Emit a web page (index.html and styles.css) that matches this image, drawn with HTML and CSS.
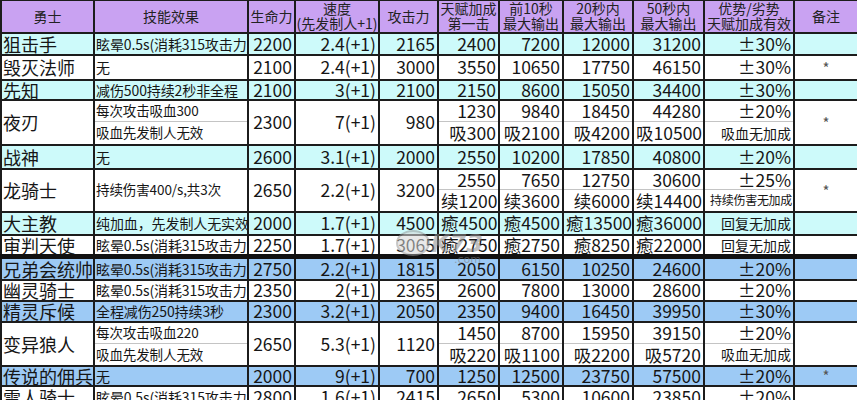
FILE: index.html
```html
<!DOCTYPE html>
<html lang="zh">
<head>
<meta charset="utf-8">
<link rel="stylesheet" href="styles.css">
</head>
<body>
<div class="sheet">
<table class="grid">
<colgroup>
<col class="c1"><col class="c2"><col class="c3"><col class="c4"><col class="c5"><col class="c6"><col class="c7"><col class="c8"><col class="c9"><col class="c10"><col class="c11">
</colgroup>
<thead>
<tr class="hd">
<th>勇士</th><th>技能效果</th><th>生命力</th><th><span class="tl">速度</span><span class="tl">(先发制人+1)</span></th><th>攻击力</th><th><span class="tl">天赋加成</span><span class="tl">第一击</span></th><th><span class="tl">前10秒</span><span class="tl">最大输出</span></th><th><span class="tl">20秒内</span><span class="tl">最大输出</span></th><th><span class="tl">50秒内</span><span class="tl">最大输出</span></th><th><span class="tl">优势/劣势</span><span class="tl">天赋加成有效</span></th><th>备注</th>
</tr>
</thead>
<tbody>
<tr class="cyan h22">
<td class="nm">狙击手</td><td class="sk">眩晕0.5s(消耗315攻击力)</td><td class="n">2200</td><td class="n">2.4(+1)</td><td class="n">2165</td><td class="n">2400</td><td class="n">7200</td><td class="n">12000</td><td class="n">31200</td><td class="n">±30%</td><td class="nt"></td>
</tr>
<tr class="white h25">
<td class="nm">毁灭法师</td><td class="sk">无</td><td class="n">2100</td><td class="n">2.4(+1)</td><td class="n">3000</td><td class="n">3550</td><td class="n">10650</td><td class="n">17750</td><td class="n">46150</td><td class="n">±30%</td><td class="nt">*</td>
</tr>
<tr class="cyan h19">
<td class="nm">先知</td><td class="sk">减伤500持续2秒非全程</td><td class="n">2100</td><td class="n">3(+1)</td><td class="n">2100</td><td class="n">2150</td><td class="n">8600</td><td class="n">15050</td><td class="n">34400</td><td class="n">±30%</td><td class="nt"></td>
</tr>
<tr class="white h22">
<td class="nm" rowspan="2">夜刃</td><td class="sk sm st">每次攻击吸血300</td><td class="n" rowspan="2">2300</td><td class="n" rowspan="2">7(+1)</td><td class="n" rowspan="2">980</td><td class="n st">1230</td><td class="n st">9840</td><td class="n st">18450</td><td class="n st">44280</td><td class="n st">±20%</td><td class="nt" rowspan="2">*</td>
</tr>
<tr class="white h23">
<td class="sk sm sb">吸血先发制人无效</td><td class="n sb">吸300</td><td class="n sb">吸2100</td><td class="n sb">吸4200</td><td class="n sb">吸10500</td><td class="n sb note">吸血无加成</td>
</tr>
<tr class="cyan h24">
<td class="nm">战神</td><td class="sk">无</td><td class="n">2600</td><td class="n">3.1(+1)</td><td class="n">2000</td><td class="n">2550</td><td class="n">10200</td><td class="n">17850</td><td class="n">40800</td><td class="n">±20%</td><td class="nt"></td>
</tr>
<tr class="white h21">
<td class="nm" rowspan="2">龙骑士</td><td class="sk sm" rowspan="2">持续伤害400/s,共3次</td><td class="n" rowspan="2">2650</td><td class="n" rowspan="2">2.2(+1)</td><td class="n" rowspan="2">3200</td><td class="n st">2550</td><td class="n st">7650</td><td class="n st">12750</td><td class="n st">30600</td><td class="n st">±25%</td><td class="nt" rowspan="2">*</td>
</tr>
<tr class="white h22">
<td class="n sb">续1200</td><td class="n sb">续3600</td><td class="n sb">续6000</td><td class="n sb">续14400</td><td class="n sb note xs">持续伤害无加成</td>
</tr>
<tr class="cyan h23">
<td class="nm">大主教</td><td class="sk">纯加血，先发制人无实效</td><td class="n">2000</td><td class="n">1.7(+1)</td><td class="n">4500</td><td class="n">癒4500</td><td class="n">癒4500</td><td class="n">癒13500</td><td class="n">癒36000</td><td class="n note">回复无加成</td><td class="nt"></td>
</tr>
<tr class="white h22">
<td class="nm">审判天使</td><td class="sk">眩晕0.5s(消耗315攻击力)</td><td class="n">2250</td><td class="n">1.7(+1)</td><td class="n">3065</td><td class="n">癒2750</td><td class="n">癒2750</td><td class="n">癒8250</td><td class="n">癒22000</td><td class="n note">回复无加成</td><td class="nt"></td>
</tr>
<tr class="blue h23 thick">
<td class="nm">兄弟会统帅</td><td class="sk">眩晕0.5s(消耗315攻击力)</td><td class="n">2750</td><td class="n">2.2(+1)</td><td class="n">1815</td><td class="n">2050</td><td class="n">6150</td><td class="n">10250</td><td class="n">24600</td><td class="n">±20%</td><td class="nt"></td>
</tr>
<tr class="white h21">
<td class="nm">幽灵骑士</td><td class="sk">眩晕0.5s(消耗315攻击力)</td><td class="n">2350</td><td class="n">2(+1)</td><td class="n">2365</td><td class="n">2600</td><td class="n">7800</td><td class="n">13000</td><td class="n">28600</td><td class="n">±20%</td><td class="nt"></td>
</tr>
<tr class="blue h21">
<td class="nm">精灵斥候</td><td class="sk">全程减伤250持续3秒</td><td class="n">2300</td><td class="n">3.2(+1)</td><td class="n">2050</td><td class="n">2350</td><td class="n">9400</td><td class="n">16450</td><td class="n">39950</td><td class="n">±30%</td><td class="nt"></td>
</tr>
<tr class="white h22">
<td class="nm" rowspan="2">变异狼人</td><td class="sk sm st">每次攻击吸血220</td><td class="n" rowspan="2">2650</td><td class="n" rowspan="2">5.3(+1)</td><td class="n" rowspan="2">1120</td><td class="n st">1450</td><td class="n st">8700</td><td class="n st">15950</td><td class="n st">39150</td><td class="n st">±20%</td><td class="nt" rowspan="2"></td>
</tr>
<tr class="white h22">
<td class="sk sm sb">吸血先发制人无效</td><td class="n sb">吸220</td><td class="n sb">吸1100</td><td class="n sb">吸2200</td><td class="n sb">吸5720</td><td class="n sb note">吸血无加成</td>
</tr>
<tr class="blue h20">
<td class="nm">传说的佣兵</td><td class="sk">无</td><td class="n">2000</td><td class="n">9(+1)</td><td class="n">700</td><td class="n">1250</td><td class="n">12500</td><td class="n">23750</td><td class="n">57500</td><td class="n">±20%</td><td class="nt">*</td>
</tr>
<tr class="white h22">
<td class="nm">雷人骑士</td><td class="sk">眩晕0.5s(消耗315攻击力)</td><td class="n">2800</td><td class="n">1.6(+1)</td><td class="n">2415</td><td class="n">2650</td><td class="n">5300</td><td class="n">10600</td><td class="n">23850</td><td class="n">±20%</td><td class="nt"></td>
</tr>
</tbody>
</table>
<div class="wm"><span class="wm-face"></span><span class="wm-k">K73</span><span class="wm-com">.com</span></div>
</div>
</body>
</html>
```

FILE: styles.css
```css
html, body {
  margin: 0;
  padding: 0;
  background: #ffffff;
}
body {
  width: 857px;
  height: 400px;
  overflow: hidden;
  font-family: "Noto Sans CJK SC", "Noto Sans", sans-serif;
  color: #161616;
}
.sheet {
  position: relative;
  width: 857px;
  height: 400px;
  overflow: hidden;
}
.grid {
  border-collapse: collapse;
  table-layout: fixed;
  width: 857px;
}
.c1 { width: 93px; }
.c2 { width: 154px; }
.c3 { width: 47px; }
.c4 { width: 84px; }
.c5 { width: 59px; }
.c6 { width: 61px; }
.c7 { width: 64px; }
.c8 { width: 70px; }
.c9 { width: 71px; }
.c10 { width: 90px; }
.c11 { width: 64px; }

th, td {
  border-left: 2px solid #1c1c1c;
  border-right: 2px solid #1c1c1c;
  border-top: 2px solid #1c1c1c;
  border-bottom: 2px solid #1c1c1c;
  padding: 0 2px;
  overflow: hidden;
  white-space: nowrap;
  line-height: 1;
}
.hd { height: 32px; }
.hd th {
  background: #c9a2f2;
  font-weight: normal;
  font-size: 14px;
  color: #222;
  text-align: center;
  padding: 0;
  border-top: 1px solid #1c1c1c;
}
.tl {
  display: block;
  line-height: 15px;
}
.h19 { height: 19px; }
.h20 { height: 20px; }
.h21 { height: 21px; }
.h22 { height: 22px; }
.h23 { height: 23px; }
.h24 { height: 24px; }
.h25 { height: 25px; }

.cyan td { background: #cdfafa; }
.white td { background: #ffffff; }
.blue td { background: #9dcaf5; }

.thick td { border-top: 5px solid #111; }

.nm {
  font-size: 18px;
  text-align: left;
  padding-left: 1px;
  padding-right: 0;
}
.sk {
  font-size: 14px;
  text-align: left;
  padding-left: 1px;
  padding-right: 0;
  letter-spacing: -0.1px;
}
.sk.sm { font-size: 13.5px; }
.n {
  font-size: 17.5px;
  text-align: right;
  padding-right: 2px;
}
.n.note {
  font-size: 14px;
}
.n.note.xs {
  font-size: 12px;
  letter-spacing: -0.3px;
  padding-right: 1px;
}
.nt {
  text-align: center;
  font-size: 15px;
  color: #555;
}
.st { border-bottom: 1px solid #c4c4c4; }
.sb { border-top: 1px solid #c4c4c4; }

.wm {
  position: absolute;
  left: 396px;
  top: 230px;
  display: flex;
  align-items: flex-end;
  gap: 1px;
  opacity: 0.55;
  pointer-events: none;
}
.wm-face {
  width: 30px;
  height: 22px;
  border-radius: 50%;
  background: #d8d8d8;
  border: 2px solid #9a9a9a;
}
.wm-k {
  font-family: "DejaVu Sans", sans-serif;
  font-weight: bold;
  font-style: italic;
  font-size: 24px;
  color: #8c8c8c;
  line-height: 1;
}
.wm-com {
  font-family: "DejaVu Sans", sans-serif;
  font-size: 11px;
  color: #7d7d7d;
  margin-left: -30px;
  margin-bottom: -10px;
}
```
